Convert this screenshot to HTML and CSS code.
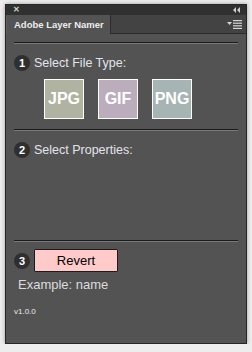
FILE: index.html
```html
<!DOCTYPE html>
<html lang="en">
<head>
  <meta charset="UTF-8" />
  <title>Adobe Layer Namer</title>
  <link rel="stylesheet" href="styles.css">
</head>
<body>
  <div class="panel">
    <div class="titlebar">
      <span class="close">&#x2715;</span>
      <span class="collapse">
        <svg width="8" height="6" viewBox="0 0 8 6"><path d="M3 0 L0 3 L3 6 Z M7 0 L4 3 L7 6 Z" fill="#cfcfcf"/></svg>
      </span>
    </div>
    <div class="tabs">
      <div class="tab">Adobe Layer Namer</div>
      <div class="tab-rest">
        <svg class="menu" width="15" height="9" viewBox="0 0 15 9">
          <path d="M0 2 L5 2 L2.5 5 Z" fill="#d6d6d6"/>
          <rect x="6" y="0" width="9" height="1.2" fill="#d6d6d6"/>
          <rect x="6" y="2.6" width="9" height="1.2" fill="#d6d6d6"/>
          <rect x="6" y="5.2" width="9" height="1.2" fill="#d6d6d6"/>
          <rect x="6" y="7.8" width="9" height="1.2" fill="#d6d6d6"/>
        </svg>
      </div>
    </div>

    <div class="content">
      <hr>
      <div class="step">
        <span class="num">1</span>
        <span class="label">Select File Type:</span>
      </div>
      <div class="types">
        <div class="type jpg">JPG</div>
        <div class="type gif">GIF</div>
        <div class="type png">PNG</div>
      </div>
      <hr>
      <div class="props">
        <div class="step">
          <span class="num">2</span>
          <span class="label">Select Properties:</span>
        </div>
      </div>
      <hr>
      <div class="step step-revert">
        <span class="num">3</span>
        <button class="revert">Revert</button>
      </div>
      <p class="example">Example: name</p>
      <p class="version">v1.0.0</p>
    </div>
  </div>
</body>
</html>
```

FILE: styles.css
```css
* {
  box-sizing: border-box;
}
body {
  margin: 0;
  padding: 4px 5px 0;
  background: #ededed;
  font-family: "Liberation Sans", sans-serif;
}
.panel {
  width: 242px;
  height: 340px;
  background: #535353;
  border: 1px solid #262626;
  box-shadow: 0 0 4px rgba(0,0,0,0.35);
  display: flex;
  flex-direction: column;
}
.titlebar {
  height: 10px;
  background: #303030;
  display: flex;
  justify-content: space-between;
  align-items: center;
  padding: 0 5px 0 7px;
}
.close {
  color: #d0d0d0;
  font-size: 8px;
  font-weight: bold;
  line-height: 1;
}
.collapse svg {
  display: block;
}
.tabs {
  height: 19px;
  display: flex;
  background: #434343;
}
.tab {
  width: 104px;
  background: #535353;
  color: #ececec;
  font-weight: bold;
  font-size: 9.5px;
  line-height: 19px;
  padding-left: 7px;
  white-space: nowrap;
  border-left: 1px solid #5e5e5e;
}
.tab-rest {
  flex: 1;
  display: flex;
  justify-content: flex-end;
  align-items: center;
  padding-right: 4px;
  border-bottom: 1px solid #2b2b2b;
  border-left: 1px solid #2b2b2b;
}
.menu {
  display: block;
}
.content {
  padding: 8px 8px 0 8px;
  flex: 1;
}
hr {
  margin: 0;
  height: 2px;
  border: none;
  border-top: 1px solid #1a1a1a;
  border-bottom: 1px solid #7a7a7a;
}
.step {
  display: flex;
  align-items: center;
  gap: 4px;
  margin-top: 11px;
}
.num {
  width: 16px;
  height: 16px;
  border-radius: 50%;
  background: #2f2f2f;
  color: #ffffff;
  font-weight: bold;
  font-size: 11px;
  line-height: 16px;
  text-align: center;
}
.label {
  color: #e2e4ec;
  font-size: 12.5px;
}
.types {
  display: flex;
  gap: 14px;
  padding-left: 30px;
  margin: 8px 0 10px;
}
.type {
  width: 40px;
  height: 40px;
  border: 1px solid #ffffff;
  color: #ffffff;
  font-weight: bold;
  font-size: 16px;
  line-height: 38px;
  text-align: center;
}
.jpg {
  background: #b0b3a1;
}
.gif {
  background: #bcadbd;
}
.png {
  background: #a6b4b4;
}
.props {
  height: 109px;
  display: flow-root;
}
.step-revert {
  margin-top: 7px;
}
.revert {
  width: 84px;
  height: 23px;
  background: #ffcaca;
  border: 1px solid #1c1c1c;
  border-radius: 1px;
  color: #000;
  font-family: inherit;
  font-size: 13px;
  padding: 0;
}
.example {
  margin: 5px 0 0 4px;
  color: #dcdcdc;
  font-size: 13px;
}
.version {
  margin: 15px 0 0;
  color: #ececec;
  font-size: 8px;
}
```
